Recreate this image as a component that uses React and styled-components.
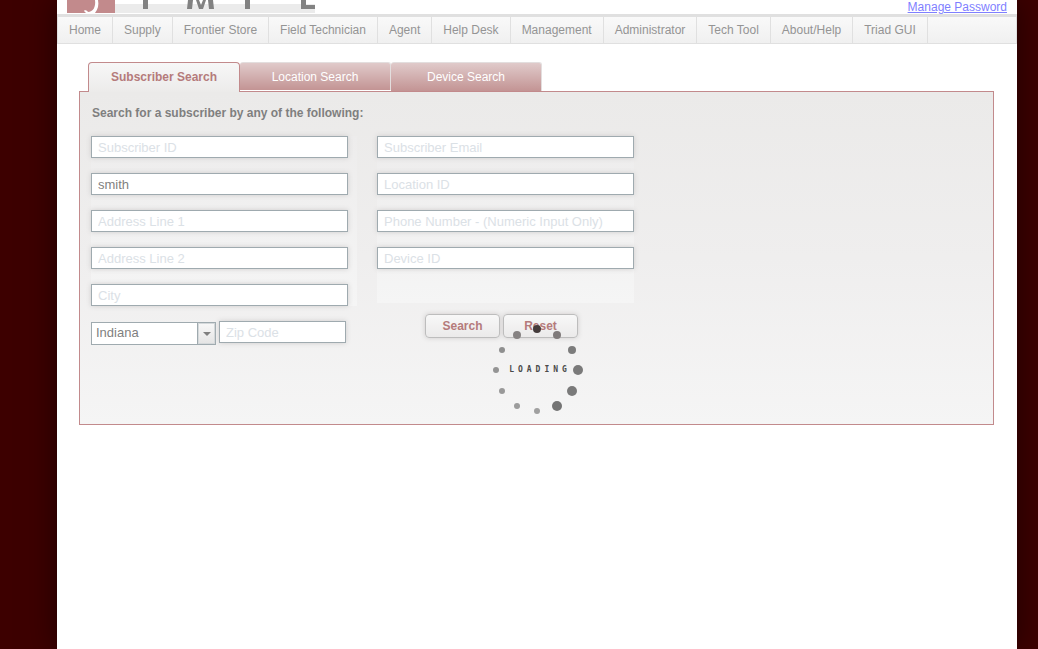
import React from "react";
import styled, { createGlobalStyle, css } from "styled-components";

const Global = createGlobalStyle`
  * { box-sizing: border-box; }
  body {
    margin: 0;
    background: #3d0000;
    font-family: "Liberation Sans", Arial, sans-serif;
    font-size: 12px;
    color: #7f7f7f;
  }
  input, select, button { font-family: inherit; }
`;

const Page = styled.div`
  min-height: 100vh;
  padding: 0 21px 0 57px;
  overflow: hidden;
`;

const Sheet = styled.div`
  min-height: 100vh;
  background: #fff;
  box-shadow: 0 0 30px rgba(0, 0, 0, 0.5);
`;

const Header = styled.header`
  height: 14px;
  display: flex;
  justify-content: space-between;
  padding: 0 10px;
`;

const Brand = styled.svg`
  display: block;
  flex: none;
`;

const AccountLink = styled.a`
  color: #7f7fff;
  line-height: 14px;
`;

const Nav = styled.nav`
  display: flex;
  height: 30px;
  border: 1px solid #e0e0e0;
  border-top-width: 3px;
  background: linear-gradient(#f9f9f9, #f0f0f0);
`;

const NavLink = styled.a`
  padding: 0 11px;
  border-right: 1px solid #e0e0e0;
  line-height: 26px;
  color: #949494;
  text-decoration: none;
  white-space: nowrap;
`;

const Main = styled.main`
  padding: 18px 23px 0 22px;
`;

const Tabs = styled.div`
  display: flex;
  align-items: flex-end;
  padding-left: 9px;
  height: 30px;
  position: relative;
  margin-bottom: -1px;
`;

const Tab = styled.button`
  width: 151px;
  height: 28px;
  margin-bottom: 2px;
  padding: 0;
  border: 0 solid #e3dede;
  border-width: 1px 1px 0 0;
  border-radius: 3px 3px 0 0;
  background: linear-gradient(#e0caca, #c39494);
  color: #fff;
  font-size: 12px;
  &:last-child {
    height: 29px;
    margin-bottom: 1px;
  }
  ${(p) => p.$active && css`
    width: 152px;
    height: 30px;
    margin: 0;
    padding-bottom: 2px;
    border: 1px solid #c28a8c;
    border-bottom: 0;
    border-radius: 4px 4px 0 0;
    background: linear-gradient(#f7f7f7, #ecebea);
    color: #b57b7b;
    font-weight: bold;
  `}
`;

const Panel = styled.form`
  min-height: 334px;
  padding: 13px 11px;
  border: 1px solid #c28a8c;
  background: linear-gradient(#ebeae9, #efeeee 50%, #f5f5f5);
`;

const Title = styled.h1`
  margin: 0 0 15px 1px;
  font-size: 12px;
  line-height: 16px;
`;

const Columns = styled.div`
  display: flex;
  align-items: flex-start;
  gap: 20px;
`;

const Column = styled.div`
  display: flex;
  flex-direction: column;
  gap: 15px;
  width: 266px;
  min-height: 167px;
  padding-right: 9px;
  background: linear-gradient(#edecec, #f5f5f5);
`;

const WideColumn = styled(Column)`
  width: 257px;
  padding-right: 0;
`;

const Field = styled.input`
  width: ${(p) => p.$width || "100%"};
  height: 22px;
  padding: 0 6px;
  border: 1px solid #9faaaf;
  border-radius: 0;
  background: #fff;
  box-shadow: 0 0 5px #cfcccc;
  color: #7f7f7f;
  font-size: 13px;
  &::placeholder { color: #dbe1e6; opacity: 1; }
`;

const BottomRow = styled.div`
  display: flex;
  align-items: flex-start;
  margin-top: 8px;
`;

const Place = styled.div`
  display: flex;
  gap: 3px;
  width: 334px;
  padding-top: 7px;
`;

const SelectBox = styled.span`
  display: grid;
  margin-top: 1px;
  width: 125px;
  height: 23px;
`;

const Select = styled.select`
  grid-area: 1 / 1;
  width: 100%;
  appearance: none;
  padding: 0 22px 2px 4px;
  border: 1px solid #9faaaf;
  border-radius: 0;
  background: #fff;
  color: #7f7f7f;
  font-size: 13px;
`;

const Arrow = styled.span`
  grid-area: 1 / 1;
  justify-self: end;
  display: grid;
  place-items: center;
  width: 19px;
  height: 23px;
  border: 1px solid #9faaaf;
  box-shadow: inset 0 0 0 1px #d5d9db;
  background: linear-gradient(#f8f8f8, #e4e4e4);
  pointer-events: none;
`;

const Actions = styled.div`
  position: relative;
  display: flex;
  gap: 3px;
`;

const Button = styled.button`
  width: 75px;
  height: 24px;
  padding: 0;
  border: 1px solid #bdbdbd;
  border-radius: 4px;
  background: linear-gradient(#f8f8f8, #ebeaea);
  box-shadow: 0 0 5px #cfcccc;
  color: #b57b7b;
  font-size: 12px;
  font-weight: bold;
`;

const Loader = styled.div`
  position: absolute;
  left: 67px;
  top: 10px;
  width: 92px;
  height: 92px;
  display: grid;
  place-items: center;
  pointer-events: none;
`;

const Dots = styled.svg`
  grid-area: 1 / 1;
`;

const LoadingText = styled.span`
  grid-area: 1 / 1;
  padding-left: 4px;
  color: #4a4a4a;
  font: bold 8px/10px "DejaVu Sans Mono", monospace;
  letter-spacing: 4px;
`;

const menu = ["Home", "Supply", "Frontier Store", "Field Technician", "Agent", "Help Desk",
  "Management", "Administrator", "Tech Tool", "About/Help", "Triad GUI"];

const dots = [
  [45, 5, 4, "#453c3c"], [65, 11, 4, "#7f7a7a"], [80, 26, 4, "#7c7c7c"], [86, 46, 5, "#7a7a7a"],
  [80, 67, 5, "#7a7a7a"], [65, 82, 5, "#747474"], [45, 87, 3, "#a0a0a0"], [25, 82, 3, "#9c9c9c"],
  [10, 67, 3, "#999"], [4, 46, 3, "#949494"], [10, 26, 3, "#8f8f8f"], [25, 11, 4, "#868282"],
];

export default function App() {
  return (
    <Page>
      <Global />
      <Sheet>
        <Header>
          <Brand width="248" height="13" aria-hidden="true">
            <rect width="48" height="13" fill="#c28a8c" />
            <path d="M28 0h3c1 5 0 9-3 13h-9l-2-2c0-1 3-1 4 1 5 0 8-5 7-12z" fill="#fff" />
            <rect x="48" y="4" width="200" height="9" fill="#ebebeb" />
            <g fill="#828282">
              <path d="M76 0h5v9h-5zM178 0h5v9h-5zM234 0h5v5h9v4h-14z" />
              <path d="M121 0h5l-1 9h-5zM129 0h3l2 5 2-5h3l-3 9h-4zM141 0h5l1 9h-5z" />
            </g>
          </Brand>
          <AccountLink href="#">Manage Password</AccountLink>
        </Header>
        <Nav>
          {menu.map((item) => <NavLink href="#" key={item}>{item}</NavLink>)}
        </Nav>
        <Main>
          <Tabs role="tablist">
            <Tab type="button" role="tab" aria-selected="true" $active>Subscriber Search</Tab>
            <Tab type="button" role="tab">Location Search</Tab>
            <Tab type="button" role="tab">Device Search</Tab>
          </Tabs>
          <Panel onSubmit={(e) => e.preventDefault()}>
            <Title>Search for a subscriber by any of the following:</Title>
            <Columns>
              <Column>
                <Field aria-label="Subscriber ID" placeholder="Subscriber ID" />
                <Field aria-label="Name" defaultValue="smith" />
                <Field aria-label="Address Line 1" placeholder="Address Line 1" />
                <Field aria-label="Address Line 2" placeholder="Address Line 2" />
                <Field aria-label="City" placeholder="City" />
              </Column>
              <WideColumn>
                <Field aria-label="Subscriber Email" placeholder="Subscriber Email" />
                <Field aria-label="Location ID" placeholder="Location ID" />
                <Field aria-label="Phone Number" placeholder="Phone Number - (Numeric Input Only)" />
                <Field aria-label="Device ID" placeholder="Device ID" />
              </WideColumn>
            </Columns>
            <BottomRow>
              <Place>
                <SelectBox>
                  <Select aria-label="State" defaultValue="Indiana"><option>Indiana</option></Select>
                  <Arrow>
                    <svg width="8" height="4" aria-hidden="true"><path d="M0 0h8L4 4z" fill="#7f7f7f" /></svg>
                  </Arrow>
                </SelectBox>
                <Field $width="127px" aria-label="Zip Code" placeholder="Zip Code" />
              </Place>
              <Actions>
                <Button type="submit">Search</Button>
                <Button type="reset">Reset</Button>
                <Loader role="status">
                  <Dots width="92" height="92" aria-hidden="true">
                    {dots.map(([x, y, r, fill]) => <circle key={`${x}-${y}`} cx={x} cy={y} r={r} fill={fill} />)}
                  </Dots>
                  <LoadingText>LOADING</LoadingText>
                </Loader>
              </Actions>
            </BottomRow>
          </Panel>
        </Main>
      </Sheet>
    </Page>
  );
}
